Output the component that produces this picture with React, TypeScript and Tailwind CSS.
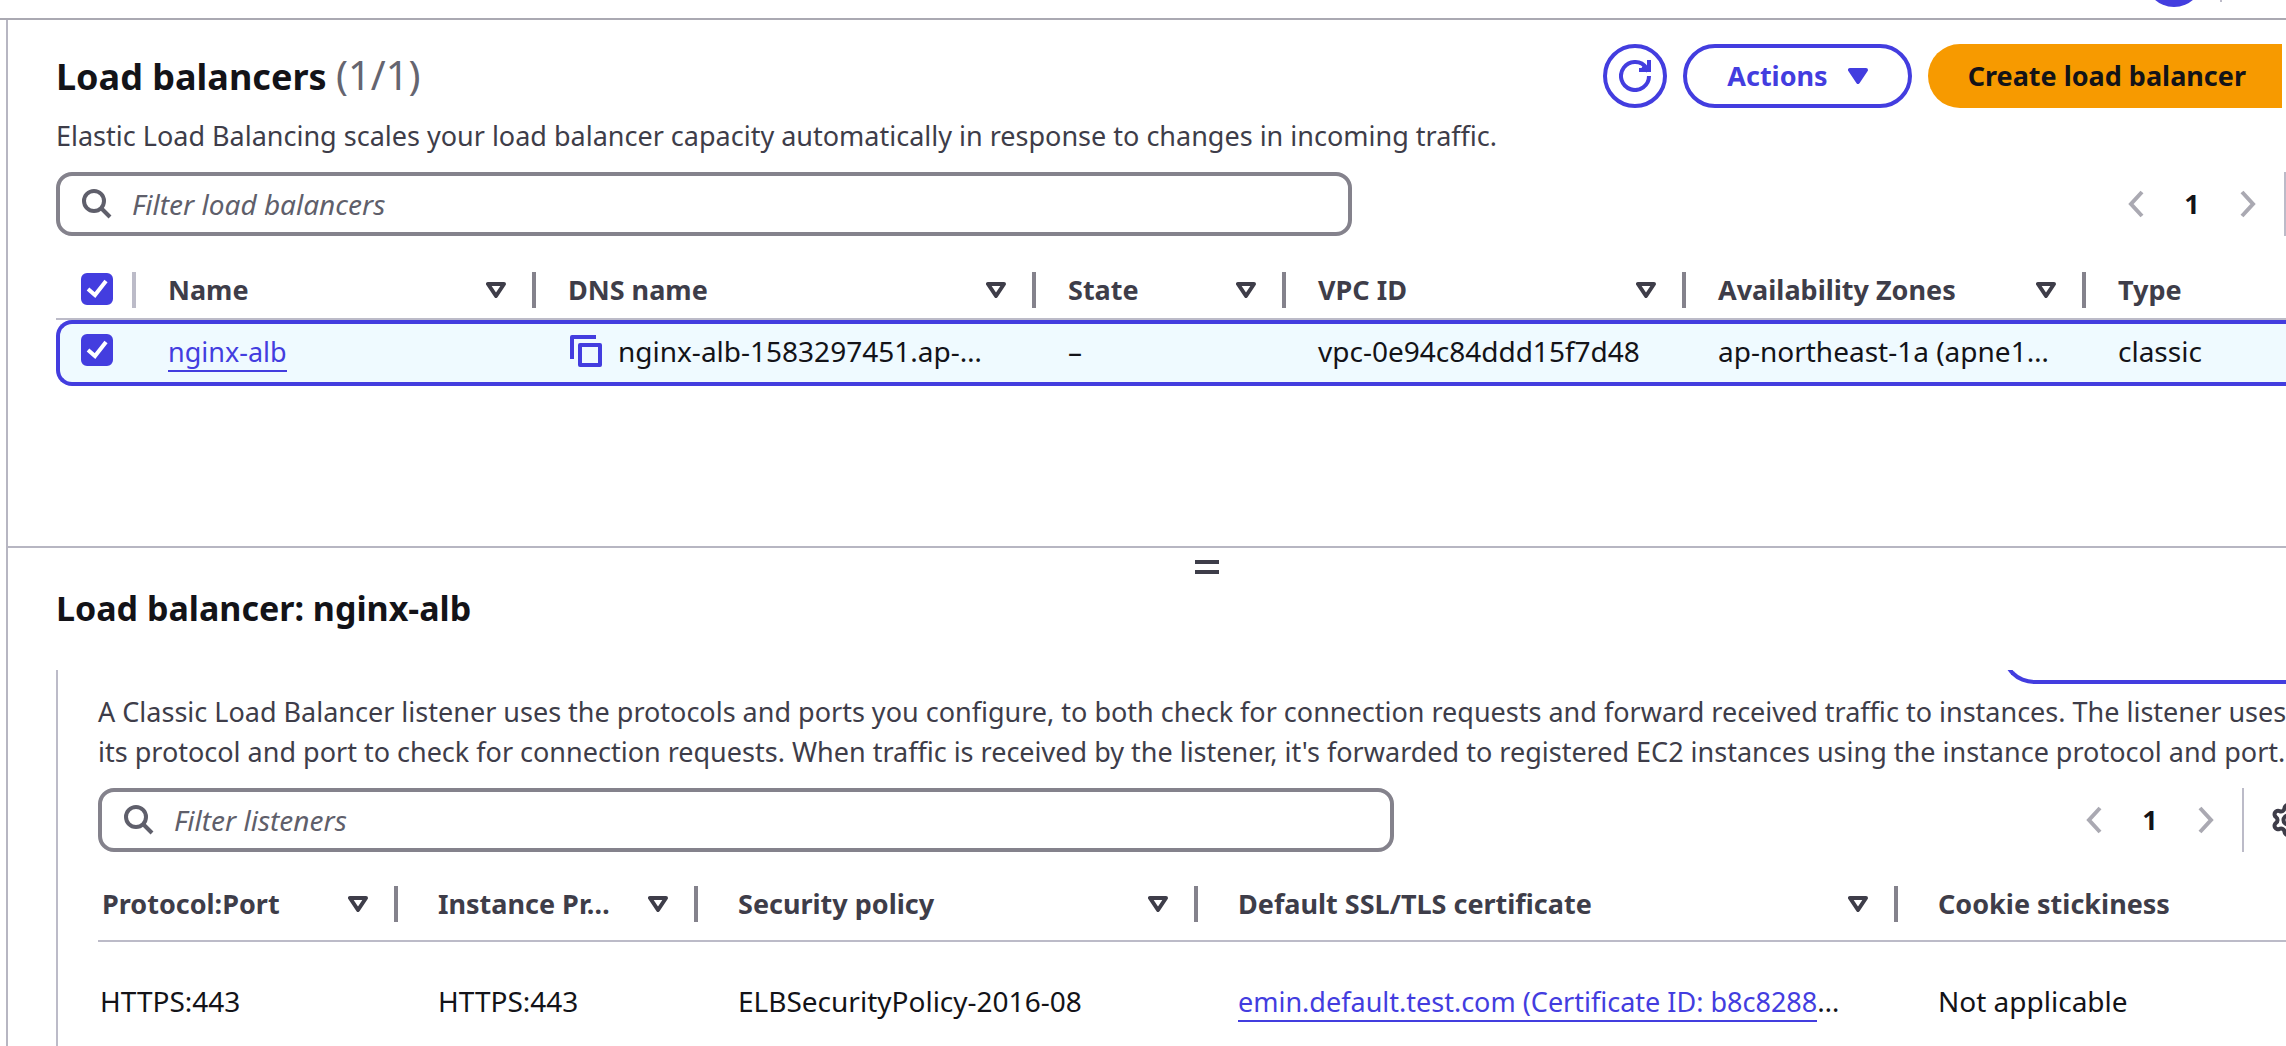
import React from 'react';
import { Settings } from 'lucide-react';

function SortIcon({ solid = false }: { solid?: boolean }) {
  return (
    <svg aria-hidden="true" viewBox="0 0 20 16" className="h-4 w-5 shrink-0">
      <path
        d="M2 2H18L10 14Z"
        fill={solid ? 'currentColor' : 'none'}
        stroke="currentColor"
        strokeWidth={4}
        strokeLinejoin="round"
      />
    </svg>
  );
}

function RefreshIcon() {
  return (
    <svg aria-hidden="true" viewBox="0 0 32 32" className="size-8" fill="none" stroke="currentColor" strokeWidth={4}>
      <path d="M30 16A14 14 0 1 1 27.5 8" />
      <path d="M30 0V10H20" />
      <path d="M24 6L29 11" />
    </svg>
  );
}

function CopyIcon() {
  return (
    <svg aria-hidden="true" viewBox="0 0 32 32" className="size-8" fill="none" stroke="currentColor" strokeWidth={4} strokeLinejoin="round">
      <path d="M2 24V2H26" />
      <rect x="10" y="10" width="20" height="20" />
    </svg>
  );
}

function Chevron({ flip = false }: { flip?: boolean }) {
  return (
    <svg aria-hidden="true" viewBox="0 0 16 28" className="h-7 w-4" fill="none" stroke="currentColor" strokeWidth={4}>
      <path d={flip ? 'M2 2L13 14L2 26' : 'M14 2L3 14L14 26'} />
    </svg>
  );
}

function Checkbox({ label }: { label: string }) {
  return (
    <label className="mb-0.5 grid size-8">
      <input
        type="checkbox"
        defaultChecked
        aria-label={label}
        className="peer col-start-1 row-start-1 size-8 appearance-none rounded-md border-4 border-[#84828c] checked:border-[#433ddf] checked:bg-[#433ddf]"
      />
      <svg
        aria-hidden="true"
        viewBox="0 0 32 32"
        className="pointer-events-none col-start-1 row-start-1 hidden size-8 peer-checked:block"
        fill="none"
        stroke="white"
        strokeWidth={4}
      >
        <path d="M7 16L14 22L25 8" />
      </svg>
    </label>
  );
}

function FilterInput({ placeholder }: { placeholder: string }) {
  return (
    <label className="flex h-16 w-full max-w-[1296px] items-center gap-5 rounded-2xl border-4 border-[#84828c] px-[22px]">
      <svg aria-hidden="true" viewBox="0 0 30 30" className="size-[30px] shrink-0" fill="none" stroke="#5f5f6b" strokeWidth={4}>
        <circle cx="12" cy="12" r="10" />
        <path d="M19 19L28 28" />
      </svg>
      <input
        type="text"
        aria-label={placeholder}
        placeholder={placeholder}
        className="min-w-0 flex-1 bg-transparent text-[28px] leading-10 outline-none placeholder:text-[#5f5f6b] placeholder:italic"
      />
    </label>
  );
}

function Pagination() {
  return (
    <nav aria-label="Pagination" className="flex items-center text-[#aaa9b2]">
      <button type="button" aria-label="Previous page">
        <Chevron />
      </button>
      <button type="button" aria-label="Page 1" className="w-24 text-center font-bold text-[#131318]">
        1
      </button>
      <button type="button" aria-label="Next page">
        <Chevron flip />
      </button>
    </nav>
  );
}

function HeaderCell({ children, label = children, pad, last = false }: { children: string; label?: string; pad: string; last?: boolean }) {
  return (
    <th scope="col" className="border-b-2 border-[#bcbbc8] p-0 text-left font-bold">
      <div className={`flex items-center ${pad}`}>
        <span className="flex-1 leading-10 whitespace-nowrap">{children}</span>
        {!last && (
          <>
            <button type="button" aria-label={`Sort by ${label}`}>
              <SortIcon />
            </button>
            <span className="ml-[26px] h-9 w-1 shrink-0 bg-[#84828c]" />
          </>
        )}
      </div>
    </th>
  );
}

const balancerColumns = ['Name', 'DNS name', 'State', 'VPC ID', 'Availability Zones'];
const listenerColumns = ['Instance Pr…', 'Security policy', 'Default SSL/TLS certificate'];
const selectedCell = 'border-y-4 border-[#433ddf] bg-[#effaff] pt-0 pr-0 pb-1 pl-8 whitespace-nowrap';
const listenerCell = 'py-0 pr-0 pl-10 whitespace-nowrap';
const linkClass = 'border-b-2 border-[#433ddf] text-[27px] text-[#433ddf]';

function LoadBalancersPanel() {
  return (
    <section className="h-[526px] pt-6 pl-12">
      <header className="flex h-16 items-center gap-4 pr-1">
        <h1 className="flex-1 text-4xl leading-[64px] font-bold text-[#131318]">
          Load balancers <span className="text-[40px] font-normal text-[#656570]">(1/1)</span>
        </h1>
        <button
          type="button"
          aria-label="Refresh"
          className="flex size-16 items-center justify-center rounded-full border-4 border-[#433ddf] text-[#433ddf]"
        >
          <RefreshIcon />
        </button>
        <button
          type="button"
          className="flex h-16 items-center gap-5 rounded-full border-4 border-[#433ddf] px-10 font-bold text-[#433ddf]"
        >
          Actions
          <SortIcon solid />
        </button>
        <button type="button" className="h-16 rounded-l-full bg-[#f79a00] pr-9 pl-10 font-bold text-[#131318]">
          Create load balancer
        </button>
      </header>
      <p className="mt-2 leading-10">
        Elastic Load Balancing scales your load balancer capacity automatically in response to changes in incoming traffic.
      </p>
      <div className="mt-4 flex justify-between">
        <FilterInput placeholder="Filter load balancers" />
        <div className="flex items-center gap-7">
          <Pagination />
          <span className="h-16 w-0.5 bg-[#bcbbc8]" />
        </div>
      </div>
      <table className="mt-[26px] w-full table-fixed border-separate border-spacing-0">
        <colgroup>
          <col className="w-20" />
          <col className="w-[400px]" />
          <col className="w-[500px]" />
          <col className="w-[250px]" />
          <col className="w-[400px]" />
          <col className="w-[400px]" />
          <col />
        </colgroup>
        <thead>
          <tr className="h-[58px]">
            <th scope="col" className="border-b-2 border-[#bcbbc8] p-0">
              <div className="flex items-center justify-between pl-[25px]">
                <Checkbox label="Select all load balancers" />
                <span className="h-9 w-1 bg-[#bcbbc8]" />
              </div>
            </th>
            {balancerColumns.map((name) => (
              <HeaderCell key={name} pad="pl-8">
                {name}
              </HeaderCell>
            ))}
            <HeaderCell pad="pl-8" last>
              Type
            </HeaderCell>
          </tr>
        </thead>
        <tbody className="text-[28px] leading-10 text-[#131318]">
          <tr className="h-[66px]">
            <td className="rounded-l-2xl border-y-4 border-l-4 border-[#433ddf] bg-[#effaff] pt-0 pr-0 pb-1 pl-[21px]">
              <Checkbox label="Select nginx-alb" />
            </td>
            <td className={selectedCell}>
              <a href="#nginx-alb" className={linkClass}>
                nginx-alb
              </a>
            </td>
            <td className={selectedCell}>
              <div className="flex items-center gap-4 pl-0.5">
                <button type="button" aria-label="Copy DNS name" className="shrink-0 text-[#433ddf]">
                  <CopyIcon />
                </button>
                <span>nginx-alb-1583297451.ap-…</span>
              </div>
            </td>
            <td className={selectedCell}>–</td>
            <td className={selectedCell}>vpc-0e94c84ddd15f7d48</td>
            <td className={selectedCell}>ap-northeast-1a (apne1…</td>
            <td className={selectedCell}>classic</td>
          </tr>
        </tbody>
      </table>
    </section>
  );
}

function DetailPanel() {
  return (
    <section className="flex min-h-0 flex-1 flex-col border-t-2 border-[#b7b6c2]">
      <div className="flex justify-center pt-3 pl-[120px]">
        <button type="button" aria-label="Resize panel" className="h-3.5 w-6 border-y-4 border-[#3e3d49]" />
      </div>
      <h2 className="mt-[14px] pl-12 text-[34px] leading-10 font-bold text-[#131318]">Load balancer: nginx-alb</h2>
      <div className="mt-[42px] ml-12 min-h-0 flex-1 overflow-hidden border-l-2 border-[#bcbbc8] pl-10">
        <button
          type="button"
          aria-label="Manage listeners"
          className="-mt-[50px] ml-auto block h-16 w-[284px] rounded-l-full border-4 border-r-0 border-[#433ddf]"
        />
        <p className="mt-2 leading-10 whitespace-nowrap">
          A Classic Load Balancer listener uses the protocols and ports you configure, to both check for connection requests
          and forward received traffic to instances. The listener uses
          <br />
          its protocol and port to check for connection requests. When traffic is received by the listener, it's forwarded to
          registered EC2 instances using the instance protocol and port.
        </p>
        <div className="mt-4 flex justify-between">
          <FilterInput placeholder="Filter listeners" />
          <div className="flex items-center">
            <Pagination />
            <span className="ml-7 h-16 w-0.5 bg-[#bcbbc8]" />
            <button type="button" aria-label="Preferences" className="w-[42px] overflow-hidden pl-[26px] text-[#3e3d49]">
              <Settings size={36} strokeWidth={2.7} className="max-w-none" />
            </button>
          </div>
        </div>
        <table className="mt-4 w-full table-fixed border-separate border-spacing-0">
          <colgroup>
            <col className="w-[300px]" />
            <col className="w-[300px]" />
            <col className="w-[500px]" />
            <col className="w-[700px]" />
            <col />
          </colgroup>
          <thead>
            <tr className="h-[74px]">
              <HeaderCell pad="pl-1">Protocol:Port</HeaderCell>
              {listenerColumns.map((name) => (
                <HeaderCell key={name} pad="pl-10">
                  {name}
                </HeaderCell>
              ))}
              <HeaderCell pad="pl-10" last>
                Cookie stickiness
              </HeaderCell>
            </tr>
          </thead>
          <tbody className="text-[28px] leading-10 text-[#131318]">
            <tr className="h-[118px]">
              <td className="py-0 pr-0 pl-0.5">HTTPS:443</td>
              <td className={listenerCell}>HTTPS:443</td>
              <td className={listenerCell}>ELBSecurityPolicy-2016-08</td>
              <td className={listenerCell}>
                <a href="#certificate" className={linkClass}>
                  emin.default.test.com (Certificate ID: b8c8288
                </a>
                …
              </td>
              <td className={listenerCell}>Not applicable</td>
            </tr>
          </tbody>
        </table>
      </div>
    </section>
  );
}

export default function App() {
  return (
    <div className="flex h-screen flex-col overflow-hidden bg-white font-['Noto_Sans',sans-serif] text-[27px] text-[#3e3d49]">
      <div className="flex h-5 shrink-0 items-end justify-end gap-[17px] overflow-hidden border-b-2 border-[#aaa9b2] pr-16">
        <button type="button" aria-label="Help" className="mb-[11px] size-[58px] shrink-0 rounded-full bg-[#433ddf]" />
        <span className="mb-4 h-8 w-0.5 bg-[#bcbbc8]" />
      </div>
      <main className="ml-1.5 flex min-h-0 flex-1 flex-col border-l-2 border-[#b7b6c2]">
        <LoadBalancersPanel />
        <DetailPanel />
      </main>
    </div>
  );
}
